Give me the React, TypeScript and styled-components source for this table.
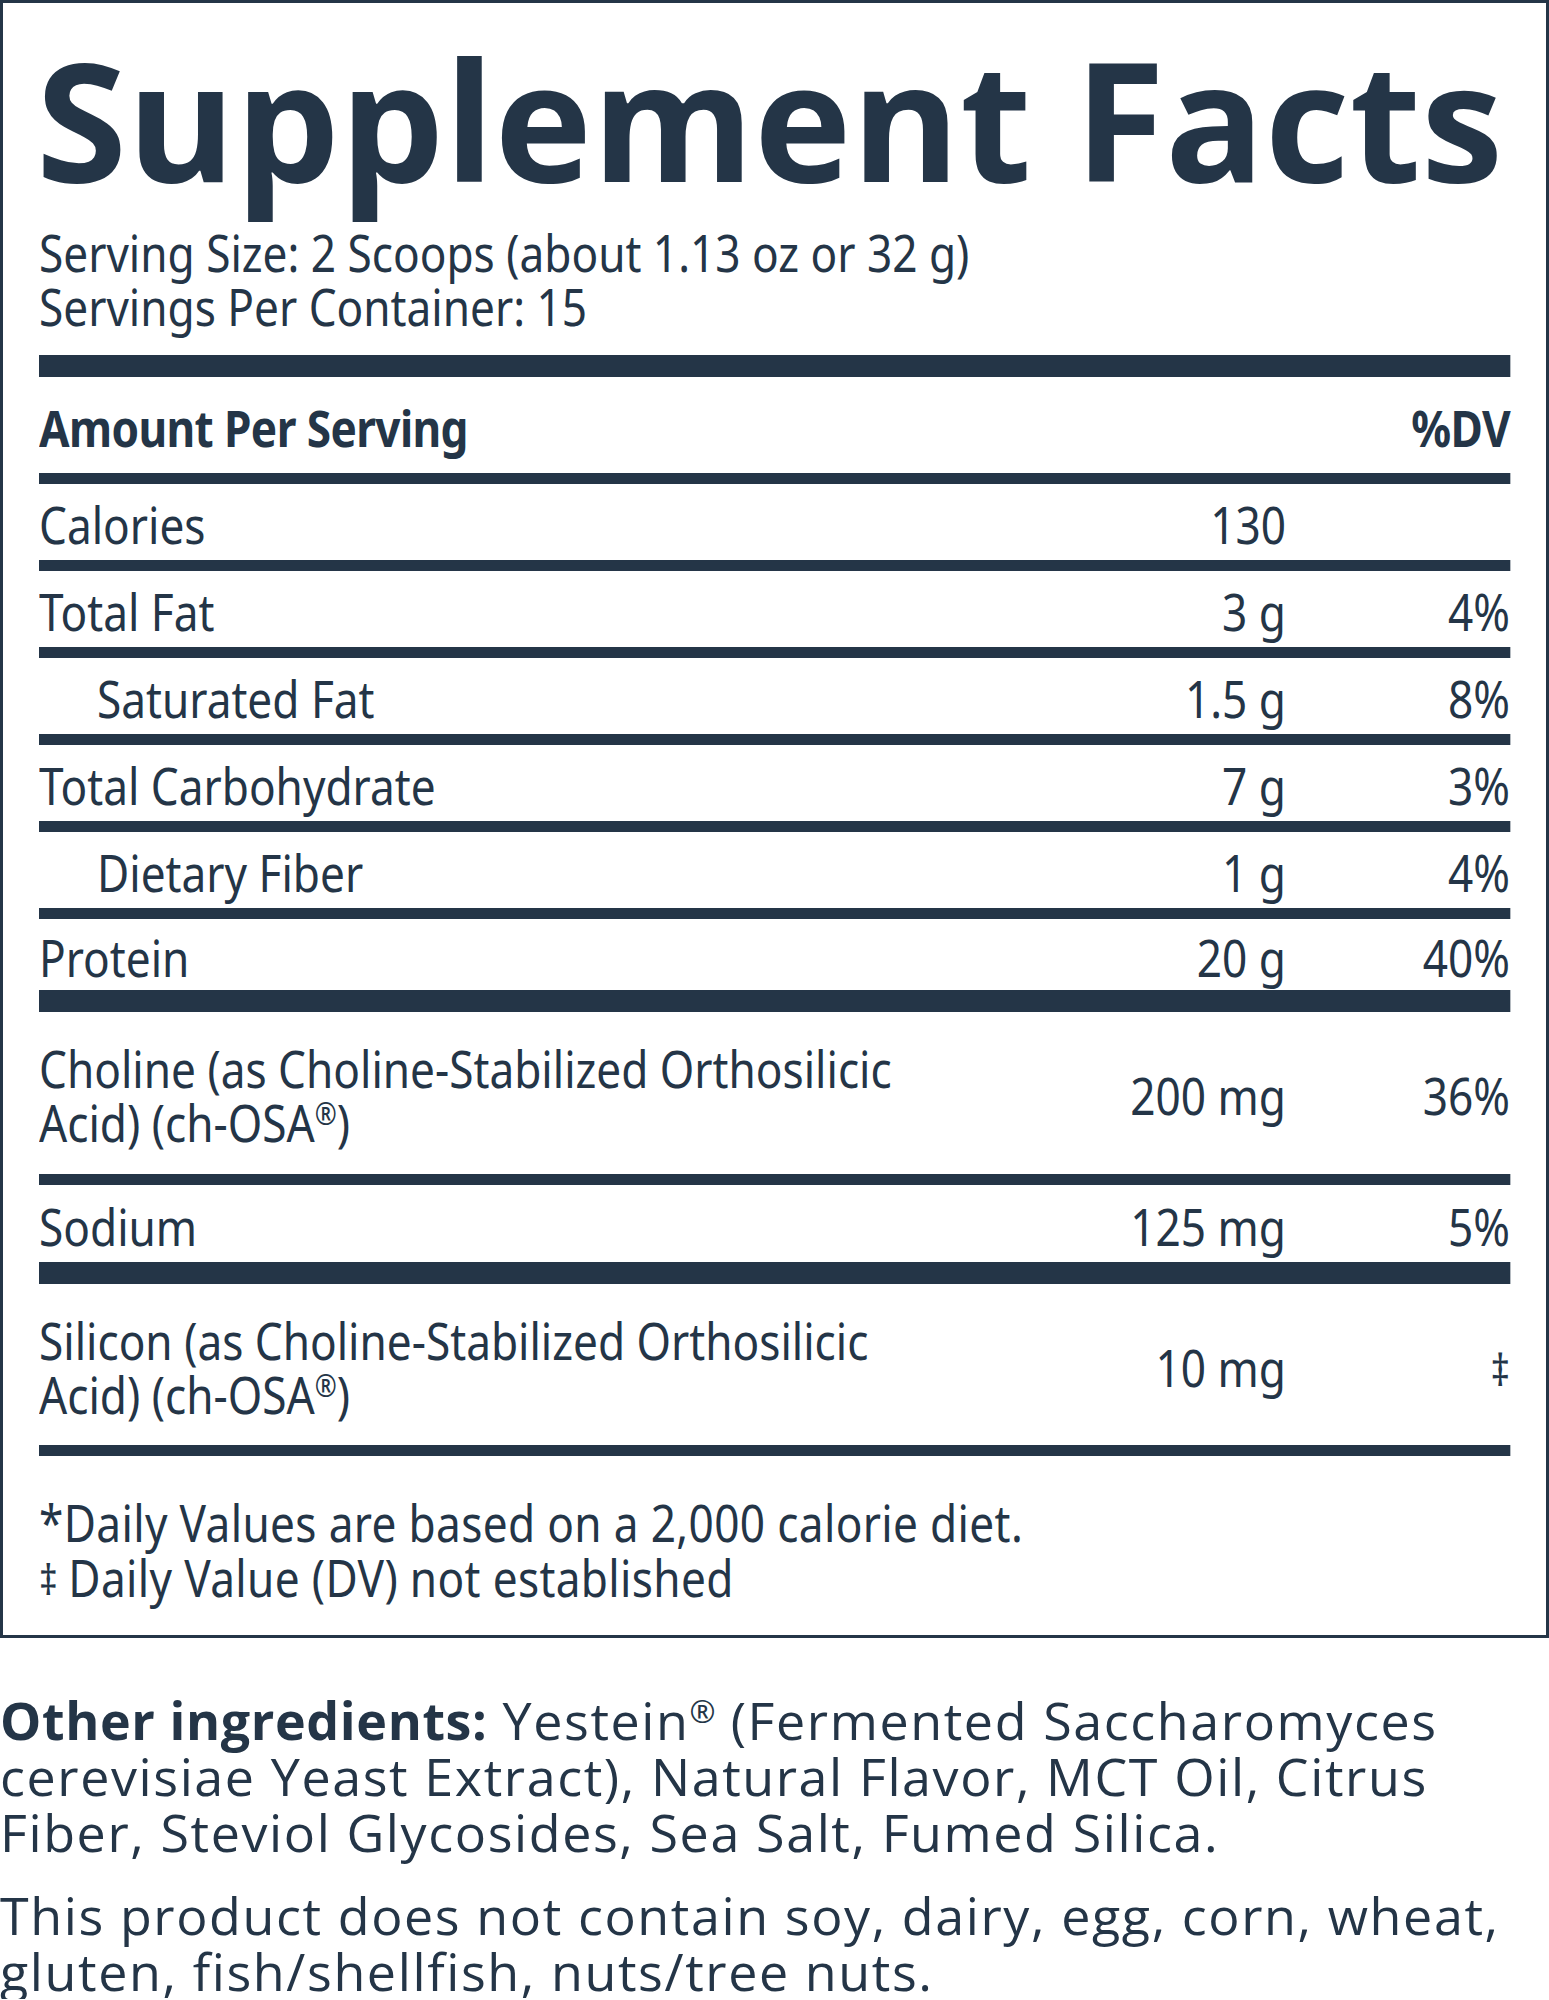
import React from "react";
import styled, { createGlobalStyle } from "styled-components";

/**
 * >>> Style
 */
const INK = "#243547";
// no condensed face is installed, so the label body is squeezed horizontally
const SQUEEZE = 0.866;
const px = (n: number) => `${Math.round((n / SQUEEZE) * 10) / 10}px`;

const GlobalStyle = createGlobalStyle`
  html, body {
    margin: 0;
    padding: 0;
    background-color: #ffffff;
  }
  * {
    box-sizing: border-box;
  }
`;

const Page = styled.main`
  width: 1549px;
  color: ${INK};
`;

const Panel = styled.section`
  border: 3px solid ${INK};
  padding: 31px 36px 29px;
  overflow: hidden;
`;

const Title = styled.h1`
  margin: 0 0 0 -3px;

  font-family: "Open Sans", sans-serif;
  font-weight: 700;
  font-size: 165px;
  line-height: 168px;
  white-space: nowrap;
`;

const Body = styled.div`
  width: ${px(1471)};
  transform: scaleX(${SQUEEZE});
  transform-origin: left top;

  font-family: "Noto Sans", "Open Sans", sans-serif;
  font-size: 51px;
  line-height: 54px;
`;

const Serving = styled.p`
  margin: 23px 0 22px;
`;

const Rule = styled.div<{ $weight: "thin" | "thick" }>`
  height: ${(p) => (p.$weight === "thick" ? 22 : 11)}px;
  background-color: ${INK};
`;

const Row = styled.div<{ $pt: number; $pb: number; $bold?: boolean }>`
  display: grid;
  grid-template-columns: minmax(0, 1fr) ${px(300)} ${px(224)};
  align-items: center;

  padding: ${(p) => p.$pt}px 0 ${(p) => p.$pb}px;
  font-weight: ${(p) => (p.$bold ? 700 : 400)};
  letter-spacing: ${(p) => (p.$bold ? "-0.7px" : "0")};
`;

const Name = styled.div<{ $indent?: boolean }>`
  padding-left: ${(p) => (p.$indent ? px(58) : 0)};
  white-space: nowrap;
`;

const Value = styled.div`
  text-align: right;
  white-space: nowrap;
`;

const Reg = styled.sup`
  font-size: 0.6em;
  line-height: 0;
  letter-spacing: 0;
  vertical-align: 0.55em;
`;

const Dagger = styled.span`
  font-size: 44px;
`;

const Footnotes = styled.div`
  margin-top: 39px;

  font-size: 51px;
  line-height: 55px;
  letter-spacing: 0.4px;

  span.mark {
    font-size: 42px;
    margin-right: 12px;
    vertical-align: 2px;
  }
`;

const Ingredients = styled.section`
  margin-top: 54px;

  font-family: "Open Sans", sans-serif;
  font-size: 52px;
  line-height: 56px;
  letter-spacing: 1.6px;

  p {
    margin: 0;
  }
  p + p {
    margin-top: 27px;
  }
  strong {
    font-weight: 700;
    letter-spacing: 0.6px;
  }
`;
// <<< Style

type Nutrient = {
  name: React.ReactNode;
  amount: string;
  dv: React.ReactNode;
  indent?: boolean;
  pt: number;
  pb: number;
  rule: "thin" | "thick";
};

const osa = (
  <>
    Acid) (ch-OSA<Reg>®</Reg>)
  </>
);

const nutrients: Nutrient[] = [
  { name: "Calories", amount: "130", dv: "", pt: 13, pb: 9, rule: "thin" },
  { name: "Total Fat", amount: "3 g", dv: "4%", pt: 13, pb: 9, rule: "thin" },
  { name: "Saturated Fat", amount: "1.5 g", dv: "8%", indent: true, pt: 13, pb: 9, rule: "thin" },
  { name: "Total Carbohydrate", amount: "7 g", dv: "3%", pt: 13, pb: 9, rule: "thin" },
  { name: "Dietary Fiber", amount: "1 g", dv: "4%", indent: true, pt: 13, pb: 9, rule: "thin" },
  { name: "Protein", amount: "20 g", dv: "40%", pt: 11, pb: 6, rule: "thick" },
  {
    name: (
      <>
        Choline (as Choline-Stabilized Orthosilicic
        <br />
        {osa}
      </>
    ),
    amount: "200 mg",
    dv: "36%",
    pt: 29,
    pb: 25,
    rule: "thin",
  },
  { name: "Sodium", amount: "125 mg", dv: "5%", pt: 14, pb: 9, rule: "thick" },
  {
    name: (
      <>
        Silicon (as Choline-Stabilized Orthosilicic
        <br />
        {osa}
      </>
    ),
    amount: "10 mg",
    dv: <Dagger>‡</Dagger>,
    pt: 29,
    pb: 24,
    rule: "thin",
  },
];

const App = () => {
  return (
    <Page>
      <GlobalStyle />
      <Panel>
        <Title>Supplement Facts</Title>
        <Body>
          <Serving>
            Serving Size: 2 Scoops (about 1.13 oz or 32 g)
            <br />
            Servings Per Container: 15
          </Serving>
          <Rule $weight="thick" />

          <Row $pt={23} $pb={19} $bold>
            <Name>Amount Per Serving</Name>
            <Value />
            <Value>%DV</Value>
          </Row>
          <Rule $weight="thin" />

          {nutrients.map((n, i) => (
            <React.Fragment key={i}>
              <Row $pt={n.pt} $pb={n.pb}>
                <Name $indent={n.indent}>{n.name}</Name>
                <Value>{n.amount}</Value>
                <Value>{n.dv}</Value>
              </Row>
              <Rule $weight={n.rule} />
            </React.Fragment>
          ))}

          <Footnotes>
            *Daily Values are based on a 2,000 calorie diet.
            <br />
            <span className="mark">‡</span>Daily Value (DV) not established
          </Footnotes>
        </Body>
      </Panel>

      <Ingredients>
        <p>
          <strong>Other ingredients:</strong> Yestein<Reg>®</Reg> (Fermented Saccharomyces
          <br />
          cerevisiae Yeast Extract), Natural Flavor, MCT Oil, Citrus
          <br />
          Fiber, Steviol Glycosides, Sea Salt, Fumed Silica.
        </p>
        <p>
          This product does not contain soy, dairy, egg, corn, wheat,
          <br />
          gluten, fish/shellfish, nuts/tree nuts.
        </p>
      </Ingredients>
    </Page>
  );
};

export default App;
